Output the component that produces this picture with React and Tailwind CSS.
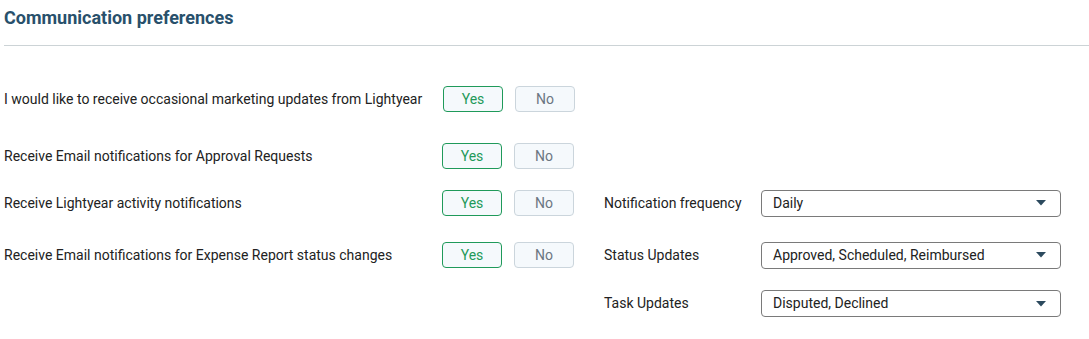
import React, { useState } from "react";

const prefs = [
  { label: "I would like to receive occasional marketing updates from Lightyear", mt: "mt-[40px]", shift: "ml-[1px]" },
  { label: "Receive Email notifications for Approval Requests", mt: "mt-[31px]" },
  { label: "Receive Lightyear activity notifications", mt: "mt-[21px]", side: { label: "Notification frequency", value: "Daily" } },
  { label: "Receive Email notifications for Expense Report status changes", mt: "mt-[26px]", side: { label: "Status Updates", value: "Approved, Scheduled, Reimbursed" } },
];

function Caret() {
  return (
    <svg width="10" height="6" viewBox="0 0 10 6" className="text-[#2c4a5e]">
      <path d="M0 0h10L5 5.5z" fill="currentColor" />
    </svg>
  );
}

function Select({ value }) {
  return (
    <div className="flex h-[27px] w-[300px] items-center justify-between rounded-[4px] border border-[#7a7a7a] bg-white pl-[11px] pr-[14px] text-[14px] text-[#222]">
      <span>{value}</span>
      <Caret />
    </div>
  );
}

function YesNo({ value, onChange, shift }) {
  return (
    <div className={`flex gap-[12px] ${shift || ""}`}>
      <button
        onClick={() => onChange(true)}
        className={`h-[26px] w-[60px] rounded-[4px] border bg-[#f5f9fc] text-[14px] ${
          value ? "border-[#1f9a5a] text-[#1f9a5a]" : "border-[#cbd5dc] text-[#6b7682]"
        }`}
      >
        Yes
      </button>
      <button
        onClick={() => onChange(false)}
        className={`h-[26px] w-[60px] rounded-[4px] border bg-[#f5f9fc] text-[14px] ${
          !value ? "border-[#1f9a5a] text-[#1f9a5a]" : "border-[#cbd5dc] text-[#6b7682]"
        }`}
      >
        No
      </button>
    </div>
  );
}

export default function App() {
  const [answers, setAnswers] = useState([true, true, true, true]);

  const setAnswer = (i, v) => {
    setAnswers((prev) => prev.map((a, j) => (j === i ? v : a)));
  };

  return (
    <div className="min-h-screen w-full bg-white pl-[4px] font-['Roboto',sans-serif] text-[#222]">
      <h1 className="pt-[6px] text-[18px] font-bold leading-[24px] text-[#28506b]">Communication preferences</h1>
      <div className="mt-[15px] border-b border-[#ccd3d6]" />

      {prefs.map((p, i) => (
        <div key={p.label} className={`flex h-[26px] items-center ${p.mt}`}>
          <div className="w-[438px] text-[14px]">{p.label}</div>
          <YesNo value={answers[i]} onChange={(v) => setAnswer(i, v)} shift={p.shift} />
          {p.side && (
            <div className="ml-[30px] flex items-center">
              <div className="w-[157px] text-[14px]">{p.side.label}</div>
              <Select value={p.side.value} />
            </div>
          )}
        </div>
      ))}

      {/* task updates sits under the right column only */}
      <div className="mt-[22px] flex h-[27px] items-center pl-[600px]">
        <div className="w-[157px] text-[14px]">Task Updates</div>
        <Select value="Disputed, Declined" />
      </div>
    </div>
  );
}
